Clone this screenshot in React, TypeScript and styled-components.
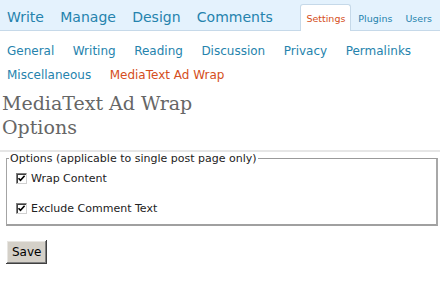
import React from 'react';
import styled, { createGlobalStyle } from 'styled-components';

const Global = createGlobalStyle`
  html, body { margin: 0; padding: 0; background: #fff; }
  body {
    font-family: "DejaVu Sans", Verdana, sans-serif;
    width: 440px;
    height: 286px;
    overflow: hidden;
  }
`;

const Header = styled.header`
  display: flex;
  justify-content: space-between;
  align-items: flex-end;
  height: 30px;
  background: #e4f2fd;
  border-bottom: 1px solid #c6d9e9;
  padding: 0 2px 0 7px;
`;

const MainMenu = styled.nav`
  display: flex;
  gap: 16.3px;
`;

const MainLink = styled.a`
  font-size: 14px;
  line-height: 16px;
  padding-bottom: 5px;
  color: #2583ad;
  text-decoration: none;
`;

const Tabs = styled.nav`
  display: flex;
  align-items: flex-end;
  gap: 1px;
  margin-bottom: -1px;
`;

const Tab = styled.a<{ $active?: boolean }>`
  font-size: 9.5px;
  line-height: 12px;
  padding: 8px 5px 6px;
  color: ${(p) => (p.$active ? '#d54e21' : '#2583ad')};
  background: ${(p) => (p.$active ? '#fff' : 'transparent')};
  border: 1px solid ${(p) => (p.$active ? '#c6d9e9' : 'transparent')};
  border-bottom: none;
  border-radius: 3px 3px 0 0;
  text-decoration: none;
`;

const SubMenu = styled.nav`
  display: flex;
  flex-wrap: wrap;
  column-gap: 18.5px;
  padding: 8px 7px 0;
  font-size: 12px;
  line-height: 24px;
`;

const SubLink = styled.a<{ $current?: boolean }>`
  color: ${(p) => (p.$current ? '#d54e21' : '#2583ad')};
  text-decoration: none;
`;

const TitleWrap = styled.div`
  border-bottom: 2px solid #e6e6e6;
  padding: 4px 0 11px 2px;
`;

const Title = styled.h2`
  margin: 0;
  width: 210px;
  font-family: "DejaVu Serif", Georgia, serif;
  font-weight: normal;
  font-size: 19px;
  line-height: 24px;
  color: #666;
`;

const Form = styled.form`
  display: flex;
  flex-direction: column;
  align-items: flex-start;
`;

const Fieldset = styled.fieldset`
  align-self: stretch;
  margin: 0 2px 0 6px;
  padding: 5px 8px 9px 2px;
  border-top: 1px solid #9a9a9a;
  border-left: 1px solid #a4a4a4;
  border-right: 2px solid #a8a8a8;
  border-bottom: 2px solid #a0a0a0;
  display: flex;
  flex-direction: column;
  gap: 15px;
`;

const Legend = styled.legend`
  padding: 0 1px;
  font-size: 11px;
  line-height: 13px;
  color: #222;
`;

const Row = styled.label`
  display: flex;
  align-items: center;
  gap: 4px;
  height: 14px;
  padding-left: 7px;
  margin-top: 1px;
  font-size: 11px;
  color: #222;
`;

const Box = styled.span`
  display: inline-flex;
  align-items: center;
  justify-content: center;
  box-sizing: border-box;
  width: 11px;
  height: 11px;
  background: #fff;
  border-top: 1px solid #808080;
  border-left: 1px solid #808080;
  border-right: 1px solid #d0d0d0;
  border-bottom: 1px solid #d0d0d0;
  box-shadow: inset 1px 1px 0 #404040;
`;

const SaveButton = styled.button`
  margin: 14px 0 0 6px;
  padding: 5px 6px;
  border: none;
  background: #d4d0c8;
  font-family: "DejaVu Sans", Verdana, sans-serif;
  font-size: 12px;
  line-height: 14px;
  color: #000;
  box-shadow: inset -1px -1px 0 #404040, inset 1px 1px 0 #ffffff,
    inset -2px -2px 0 #808080, inset 2px 2px 0 #e8e6e2;
`;

function Check() {
  return (
    <Box>
      <svg width="9" height="9" viewBox="0 0 9 9">
        <path d="M1.5 4.2 L3.5 6.3 L7.6 1.8" fill="none" stroke="#000" strokeWidth="1.6" />
      </svg>
    </Box>
  );
}

export default function App() {
  const subs = ['General', 'Writing', 'Reading', 'Discussion', 'Privacy', 'Permalinks', 'Miscellaneous'];
  return (
    <>
      <Global />
      <Header>
        <MainMenu>
          <MainLink>Write</MainLink>
          <MainLink>Manage</MainLink>
          <MainLink>Design</MainLink>
          <MainLink>Comments</MainLink>
        </MainMenu>
        <Tabs>
          <Tab $active>Settings</Tab>
          <Tab>Plugins</Tab>
          <Tab>Users</Tab>
        </Tabs>
      </Header>
      <SubMenu>
        {subs.map((s) => (
          <SubLink key={s}>{s}</SubLink>
        ))}
        <SubLink $current>MediaText Ad Wrap</SubLink>
      </SubMenu>
      <TitleWrap>
        <Title>MediaText Ad Wrap Options</Title>
      </TitleWrap>
      <Form onSubmit={(e) => e.preventDefault()}>
        <Fieldset>
          <Legend>Options (applicable to single post page only)</Legend>
          <Row>
            <Check />
            Wrap Content
          </Row>
          <Row>
            <Check />
            Exclude Comment Text
          </Row>
        </Fieldset>
        <SaveButton type="submit">Save</SaveButton>
      </Form>
    </>
  );
}
